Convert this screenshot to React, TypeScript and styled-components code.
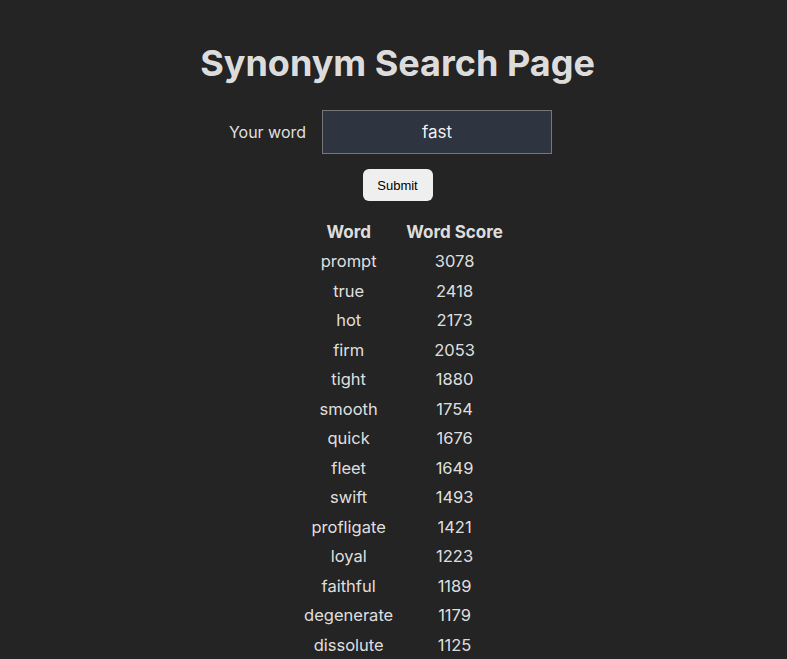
import React from "react";
import styled, { createGlobalStyle } from "styled-components";

const Global = createGlobalStyle`
  html, body { margin: 0; padding: 0; background: #242424; }
  body {
    font-family: Inter, "Noto Sans", sans-serif;
    color: rgba(255,255,255,0.87);
    overflow: hidden;
  }
`;

const Page = styled.main`
  display: flex;
  flex-direction: column;
  align-items: center;
  padding-top: 42px;
  padding-left: 8px;
`;

const Title = styled.h1`
  margin: 0 0 25px;
  font-size: 36px;
  font-weight: 700;
  line-height: 1.2;
`;

const FormRow = styled.div`
  display: flex;
  align-items: center;
  gap: 16px;
  margin-right: 14px;
`;

const Label = styled.label`
  font-size: 16px;
`;

const Input = styled.input`
  width: 230px;
  height: 44px;
  box-sizing: border-box;
  background: #2e3440;
  border: 1px solid #777;
  color: rgba(255,255,255,0.95);
  font-family: Inter, sans-serif;
  font-size: 17px;
  text-align: center;
  outline: none;
`;

const Button = styled.button`
  margin-top: 15px;
  width: 70px;
  height: 32px;
  border: none;
  border-radius: 6px;
  background: #efefef;
  color: #000;
  font-family: "Liberation Sans", Arial, sans-serif;
  font-size: 13px;
`;

const Table = styled.table`
  margin-top: 16px;
  margin-left: 12px;
  border-collapse: separate;
  border-spacing: 13px 0;
  font-size: 16.5px;
`;

const Th = styled.th`
  font-weight: 700;
  font-size: 17px;
  padding: 0;
  line-height: 30px;
`;

const Td = styled.td`
  text-align: center;
  padding: 0;
  line-height: 29.5px;
`;

const rows: [string, number][] = [
  ["prompt", 3078], ["true", 2418], ["hot", 2173], ["firm", 2053], ["tight", 1880],
  ["smooth", 1754], ["quick", 1676], ["fleet", 1649], ["swift", 1493], ["profligate", 1421],
  ["loyal", 1223], ["faithful", 1189], ["degenerate", 1179], ["dissolute", 1125],
];

export default function App() {
  return (
    <>
      <Global />
      <Page>
        <Title>Synonym Search Page</Title>
        <FormRow>
          <Label>Your word</Label>
          <Input defaultValue="fast" />
        </FormRow>
        <Button>Submit</Button>
        <Table>
          <thead>
            <tr><Th>Word</Th><Th>Word Score</Th></tr>
          </thead>
          <tbody>
            {rows.map(([w, s]) => (
              <tr key={w}><Td>{w}</Td><Td>{s}</Td></tr>
            ))}
          </tbody>
        </Table>
      </Page>
    </>
  );
}
